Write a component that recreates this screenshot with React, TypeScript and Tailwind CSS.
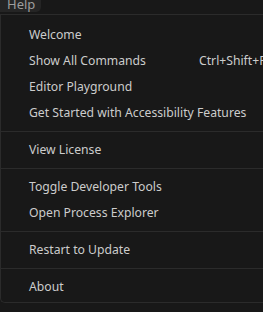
import React from "react";

type Item = { label: string; shortcut?: string } | "sep";

const items: Item[] = [
  { label: "Welcome" },
  { label: "Show All Commands", shortcut: "Ctrl+Shift+P" },
  { label: "Editor Playground" },
  { label: "Get Started with Accessibility Features" },
  "sep",
  { label: "View License" },
  "sep",
  { label: "Toggle Developer Tools" },
  { label: "Open Process Explorer" },
  "sep",
  { label: "Restart to Update" },
  "sep",
  { label: "About" },
];

export default function App() {
  return (
    <div
      className="w-[263px] h-[312px] overflow-hidden bg-[#181818] text-[#cccccc]"
      style={{ fontFamily: '"Noto Sans", "Open Sans", sans-serif' }}
    >
      <div className="h-[15px] border-b border-[#2b2b2b] flex">
        <div className="w-[41px] h-[14px] rounded-br-[5px] bg-[#252525] text-[#9d9d9d] text-[13px] leading-[12px] pl-[7px] -mt-[2px]">
          Help
        </div>
      </div>
      <div className="h-[288px] border-b border-l border-[#2b2b2b] rounded-bl-[5px] bg-[#181818] pt-[7px] whitespace-nowrap">
        {items.map((it, i) =>
          it === "sep" ? (
            <div key={i} className="h-[11px] flex items-center">
              <div className="h-px w-full bg-[#2b2b2b]" />
            </div>
          ) : (
            <div key={i} className="h-[26px] flex items-center pl-[28px] text-[12.2px]">
              <span className="w-[170px] shrink-0">{it.label}</span>
              {it.shortcut && <span className="shrink-0 text-[#cccccc]">{it.shortcut}</span>}
            </div>
          )
        )}
      </div>
    </div>
  );
}
